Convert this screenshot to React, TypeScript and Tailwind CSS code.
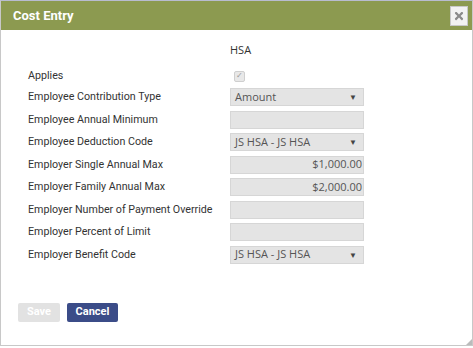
import { FaTimes } from 'react-icons/fa';

type Row = {
  label: string;
  kind: 'check' | 'select' | 'text';
  value?: string;
};

const rows: Row[] = [
  { label: 'Employee Contribution Type', kind: 'select', value: 'Amount' },
  { label: 'Employee Annual Minimum', kind: 'text' },
  { label: 'Employee Deduction Code', kind: 'select', value: 'JS HSA - JS HSA' },
  { label: 'Employer Single Annual Max', kind: 'text', value: '$1,000.00' },
  { label: 'Employer Family Annual Max', kind: 'text', value: '$2,000.00' },
  { label: 'Employer Number of Payment Override', kind: 'text' },
  { label: 'Employer Percent of Limit', kind: 'text' },
  { label: 'Employer Benefit Code', kind: 'select', value: 'JS HSA - JS HSA' },
];

function Field({ row }: { row: Row }) {
  if (row.kind === 'select') {
    return (
      <div className="flex h-[18px] w-[134px] items-center justify-between border border-[#d6d6d6] bg-[#e4e4e4] pl-[4px] pr-[6px] text-[11px] text-[#555] [font-family:'Open_Sans',sans-serif]">
        <span>{row.value}</span>
        <span className="text-[8px] text-[#444]">▼</span>
      </div>
    );
  }
  return (
    <div className="flex h-[18px] w-[134px] items-center justify-end border border-[#d6d6d6] bg-[#e4e4e4] px-[1px] text-[11px] text-[#555] [font-family:'Open_Sans',sans-serif]">
      {row.value}
    </div>
  );
}

export default function App() {
  return (
    <div className="h-[348px] w-[473px] bg-white [font-family:Roboto,sans-serif]">
      <div className="relative flex h-[346px] w-[473px] flex-col border-x border-t border-b border-x-[#c8c8c8] border-t-[#b8bcd0] border-b-[#c8c8c8] bg-white">
        {/* header */}
        <div className="flex h-[29px] items-center justify-between bg-[#8c9a50] pl-[12px] pr-[4px]">
          <h1 className="text-[13px] font-bold text-white">Cost Entry</h1>
          <button className="flex h-[20px] w-[18px] items-center justify-center border border-[#c8c8c8] bg-[#f2f2f2] text-[#8a8a8a]">
            <FaTimes className="h-[12px] w-[12px]" />
          </button>
        </div>

        {/* body */}
        <div className="flex-1 px-[27px] pt-[12px]">
          <div className="grid grid-cols-[202px_134px] items-center text-[10.7px] text-[#333]">
            <div />
            <div className="h-[16px] text-[11px] leading-[16px] [font-family:'Open_Sans',sans-serif]">HSA</div>

            <div className="mt-[10px] h-[16px] leading-[16px]">Applies</div>
            <div className="mt-[10px] flex h-[16px] items-center pl-[4px]">
              <div className="flex h-[11px] w-[11px] items-center justify-center rounded-[2px] border border-[#cfcfcf] bg-[#e8e8e8] text-[8px] text-[#999]">
                ✓
              </div>
            </div>
          </div>

          <div className="mt-[4px] grid grid-cols-[202px_134px] items-center gap-y-[4.5px] text-[10.7px] text-[#333]">
            {rows.map((row) => (
              <>
                <div key={row.label + 'l'} className="leading-[18px]">
                  {row.label}
                </div>
                <Field key={row.label + 'f'} row={row} />
              </>
            ))}
          </div>
        </div>

        {/* footer */}
        <div className="flex gap-[7px] pb-[23px] pl-[17px]">
          <button className="h-[19px] w-[42px] rounded-[2px] bg-[#e2e2e2] text-[11px] font-bold text-white">
            Save
          </button>
          <button className="h-[19px] w-[51px] rounded-[2px] bg-[#3b4c88] text-[11px] font-bold text-white">
            Cancel
          </button>
        </div>

        {/* resize grip */}
        <svg className="absolute bottom-0 right-0" width="6" height="6" viewBox="0 0 6 6">
          <path d="M6 0 L6 6 L0 6 Z" fill="#bbb" />
        </svg>
      </div>
    </div>
  );
}
